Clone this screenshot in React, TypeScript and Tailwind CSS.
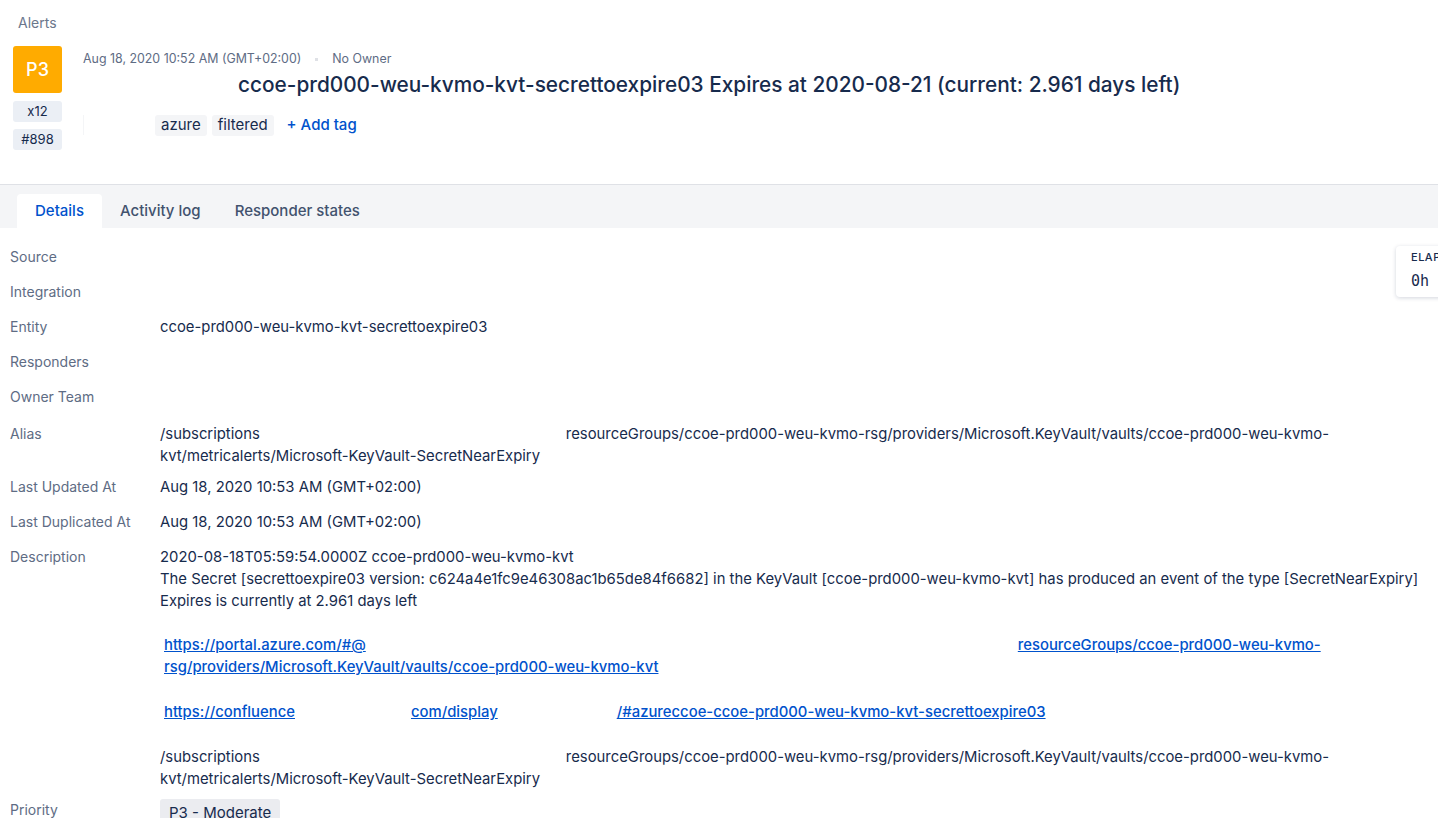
import React from 'react';

const Row = ({ label, children, className = '' }: { label: string; children?: React.ReactNode; className?: string }) => (
  <div className={`flex ${className}`}>
    <div className="w-[160px] shrink-0 pl-[10px] text-[14px] leading-[22px] text-[#5e6c84]">{label}</div>
    <div className="min-h-[22px] text-[14.85px] leading-[22px] text-[#172b4d]">{children}</div>
  </div>
);

const Gap = ({ w }: { w: string }) => <span className={`inline-block ${w}`} />;

const linkCls = 'text-[#0052cc] underline font-medium';

const App = () => {
  return (
    <div className="relative h-[818px] w-[1438px] overflow-hidden bg-white" style={{ fontFamily: 'Inter, "Noto Sans", sans-serif' }}>
      <div className="px-[18px] pt-[14px] text-[14px] leading-[18px] text-[#6b778c]">Alerts</div>

      <div className="flex pl-[13px] pt-[14px]">
        <div className="flex w-[49px] flex-col gap-[7px]">
          <div className="flex h-[47px] w-[49px] items-center justify-center rounded-[3px] bg-[#ffab00] text-[18px] font-medium text-white">P3</div>
          <div className="mt-[1px] flex h-[21px] items-center justify-center rounded-[3px] bg-[#ebeff5] text-[13px] text-[#172b4d]">x12</div>
          <div className="flex h-[21px] items-center justify-center rounded-[3px] bg-[#ebeff5] text-[13px] text-[#172b4d]">#898</div>
        </div>

        <div className="ml-[21px] flex flex-col">
          <div className="mt-[5px] flex items-center text-[12.4px] leading-[16px] text-[#5e6c84]">
            <span>Aug 18, 2020 10:52 AM (GMT+02:00)</span>
            <span className="mx-[14px] h-[3px] w-[3px] bg-[#dfe1e6]" />
            <span>No Owner</span>
          </div>
          <h1 className="ml-[155px] mt-[5px] whitespace-nowrap text-[20.8px] font-medium leading-[26px] text-[#172b4d]">
            ccoe-prd000-weu-kvmo-kvt-secrettoexpire03 Expires at 2020-08-21 (current: 2.961 days left)
          </h1>
          <div className="mt-[16px] flex items-center">
            <span className="h-[20px] w-[1px] bg-[#f4f5f7]" />
            <span className="ml-[71px] flex h-[21px] items-center rounded-[3px] bg-[#f4f5f7] px-[6px] text-[15px] text-[#172b4d]">azure</span>
            <span className="ml-[5px] flex h-[21px] items-center rounded-[3px] bg-[#f4f5f7] px-[6px] text-[15px] text-[#172b4d]">filtered</span>
            <span className="ml-[13px] text-[15px] font-medium text-[#0052cc]">+ Add tag</span>
          </div>
        </div>
      </div>

      <div className="mt-[34px] border-t border-[#dfe1e6] bg-[#f4f5f7] pt-[9px]">
        <div className="flex items-end pl-[17px] text-[15px] leading-[34px]">
          <div className="rounded-t-[4px] bg-white px-[18px] font-medium text-[#0052cc]">Details</div>
          <div className="ml-[18px] font-medium text-[#42526e]">Activity log</div>
          <div className="ml-[34px] font-medium text-[#42526e]">Responder states</div>
        </div>
      </div>

      <div className="flex flex-col gap-[13px] pt-[18px]">
        <Row label="Source" />
        <Row label="Integration" />
        <Row label="Entity">ccoe-prd000-weu-kvmo-kvt-secrettoexpire03</Row>
        <Row label="Responders" />
        <Row label="Owner Team" />
        <Row label="Alias" className="mt-[2px]">
          <div className="whitespace-nowrap">
            /subscriptions<Gap w="w-[306px]" />resourceGroups/ccoe-prd000-weu-kvmo-rsg/providers/Microsoft.KeyVault/vaults/ccoe-prd000-weu-kvmo-
          </div>
          <div className="whitespace-nowrap">kvt/metricalerts/Microsoft-KeyVault-SecretNearExpiry</div>
        </Row>
        <Row label="Last Updated At" className="-mt-[4px]">Aug 18, 2020 10:53 AM (GMT+02:00)</Row>
        <Row label="Last Duplicated At">Aug 18, 2020 10:53 AM (GMT+02:00)</Row>
        <Row label="Description">
          <div className="whitespace-nowrap">2020-08-18T05:59:54.0000Z ccoe-prd000-weu-kvmo-kvt</div>
          <div className="whitespace-nowrap">
            The Secret [secrettoexpire03 version: c624a4e1fc9e46308ac1b65de84f6682] in the KeyVault [ccoe-prd000-weu-kvmo-kvt] has produced an event of the type [SecretNearExpiry]
          </div>
          <div className="whitespace-nowrap">Expires is currently at 2.961 days left</div>
          <div className="h-[22px]" />
          <div className="whitespace-nowrap pl-[4px]">
            <span className={linkCls}>https://portal.azure.com/#@</span>
            <Gap w="w-[652px]" />
            <span className={linkCls}>resourceGroups/ccoe-prd000-weu-kvmo-</span>
          </div>
          <div className="whitespace-nowrap pl-[4px]">
            <span className={linkCls}>rsg/providers/Microsoft.KeyVault/vaults/ccoe-prd000-weu-kvmo-kvt</span>
          </div>
          <div className="h-[23px]" />
          <div className="whitespace-nowrap pl-[4px]">
            <span className={linkCls}>https://confluence</span>
            <Gap w="w-[116px]" />
            <span className={linkCls}>com/display</span>
            <Gap w="w-[119px]" />
            <span className={linkCls}>/#azureccoe-ccoe-prd000-weu-kvmo-kvt-secrettoexpire03</span>
          </div>
          <div className="h-[23px]" />
          <div className="whitespace-nowrap">
            /subscriptions<Gap w="w-[306px]" />resourceGroups/ccoe-prd000-weu-kvmo-rsg/providers/Microsoft.KeyVault/vaults/ccoe-prd000-weu-kvmo-
          </div>
          <div className="whitespace-nowrap">kvt/metricalerts/Microsoft-KeyVault-SecretNearExpiry</div>
        </Row>
        <Row label="Priority" className="-mt-[4px]">
          <span className="inline-block rounded-[3px] bg-[#ebecf0] px-[9px] pt-[3px] text-[15px] leading-[22px] text-[#172b4d]">P3 - Moderate</span>
        </Row>
      </div>

      <div className="absolute left-[1396px] top-[246px] h-[51px] w-[120px] rounded-[4px] bg-white pl-[15px] pt-[3px] shadow-[0_1px_4px_rgba(9,30,66,0.18)]">
        <div className="text-[11px] font-medium tracking-[0.5px] text-[#172b4d]">ELAPSED</div>
        <div className="mt-[4px] text-[15px] text-[#172b4d]" style={{ fontFamily: '"DejaVu Sans Mono", monospace' }}>0h 12m</div>
      </div>
    </div>
  );
};

export default App;
